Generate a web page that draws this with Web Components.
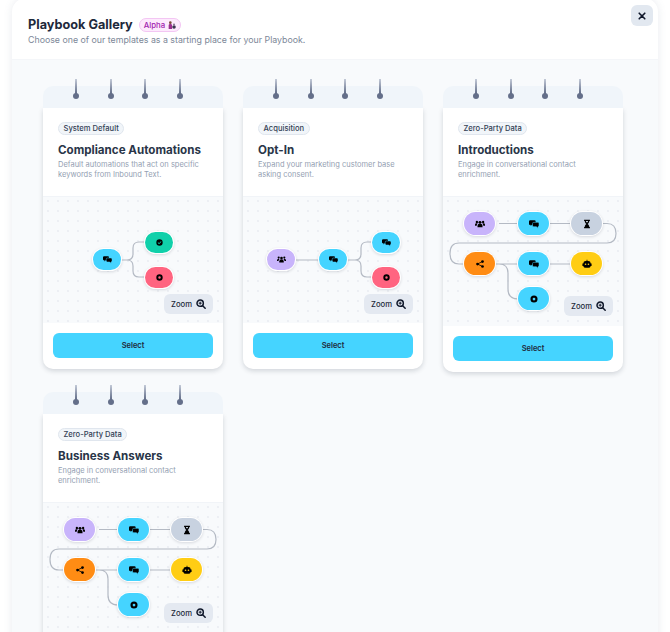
<!DOCTYPE html>
<html>
<head>
<meta charset="utf-8">
<title>Playbook Gallery</title>
<style>
    html, body { margin: 0; height: 632px; overflow: hidden; background: #fff; font-family: Inter, "Liberation Sans", sans-serif; }
</style>
</head>
<body>
<gallery-modal>
    <span slot="title">Playbook Gallery</span>
    <span slot="subtitle">Choose one of our templates as a starting place for your Playbook.</span>

    <playbook-card tag="System Default" heading="Compliance Automations" text="Default automations that act on specific keywords from Inbound Text.">
        <flow-diagram height="127" zoom-bottom="9" wires="M78 64H84Q90 64 90 58V52Q90 46 96 46H102M84 64Q90 64 90 70V75Q90 81 96 81H102">
            <flow-node x="50" y="53" w="28" h="21" color="#45d4ff" icon="chat"></flow-node>
            <flow-node x="102" y="36" w="28" h="21" color="#10d0aa" icon="check"></flow-node>
            <flow-node x="102" y="71" w="28" h="21" color="#ff6480" icon="dot"></flow-node>
        </flow-diagram>
    </playbook-card>

    <playbook-card tag="Acquisition" heading="Opt-In" text="Expand your marketing customer base asking consent.">
        <flow-diagram height="127" zoom-bottom="9" wires="M53 64H76M104 64H112Q118 64 118 58V52Q118 46 124 46H129M112 64Q118 64 118 70V75Q118 81 124 81H129">
            <flow-node x="24" y="53" w="28" h="21" color="#c8b4fb" icon="users"></flow-node>
            <flow-node x="76" y="53" w="28" h="21" color="#45d4ff" icon="chat"></flow-node>
            <flow-node x="129" y="36" w="28" h="21" color="#45d4ff" icon="chat"></flow-node>
            <flow-node x="129" y="71" w="28" h="21" color="#ff6480" icon="dot"></flow-node>
        </flow-diagram>
    </playbook-card>

    <playbook-card tag="Zero-Party Data" heading="Introductions" text="Engage in conversational contact enrichment.">
        <flow-diagram height="130" zoom-bottom="10" wires="M56 27.5H74M107 27.5H127M160 27.5H164Q173 27.5 173 37.5Q173 47 164 47H16Q7 47 7 57.5Q7 68 16 68H21M52 68H75M107 68H127M52 68H56Q65 68 65 77V93Q65 103 75 103">
            <flow-node x="21" y="16" w="31" h="23" color="#c8b4fb" icon="users"></flow-node>
            <flow-node x="75" y="16" w="31" h="23" color="#45d4ff" icon="chat"></flow-node>
            <flow-node x="128" y="16" w="31" h="23" color="#c8d2e0" icon="hourglass"></flow-node>
            <flow-node x="21" y="56" w="31" h="23" color="#ff8c14" icon="share"></flow-node>
            <flow-node x="75" y="56" w="31" h="23" color="#45d4ff" icon="chat"></flow-node>
            <flow-node x="128" y="56" w="31" h="23" color="#ffcd14" icon="robot"></flow-node>
            <flow-node x="75" y="91" w="31" h="23" color="#45d4ff" icon="dot"></flow-node>
        </flow-diagram>
    </playbook-card>

    <playbook-card tag="Zero-Party Data" heading="Business Answers" text="Engage in conversational contact enrichment.">
        <flow-diagram height="130" zoom-bottom="9" wires="M56 27.5H74M107 27.5H127M160 27.5H164Q173 27.5 173 37.5Q173 47 164 47H16Q7 47 7 57.5Q7 68 16 68H21M52 68H75M107 68H127M52 68H56Q65 68 65 77V93Q65 103 75 103">
            <flow-node x="21" y="16" w="31" h="23" color="#c8b4fb" icon="users"></flow-node>
            <flow-node x="75" y="16" w="31" h="23" color="#45d4ff" icon="chat"></flow-node>
            <flow-node x="128" y="16" w="31" h="23" color="#c8d2e0" icon="hourglass"></flow-node>
            <flow-node x="21" y="56" w="31" h="23" color="#ff8c14" icon="share"></flow-node>
            <flow-node x="75" y="56" w="31" h="23" color="#45d4ff" icon="chat"></flow-node>
            <flow-node x="128" y="56" w="31" h="23" color="#ffcd14" icon="robot"></flow-node>
            <flow-node x="75" y="91" w="31" h="23" color="#45d4ff" icon="dot"></flow-node>
        </flow-diagram>
    </playbook-card>
</gallery-modal>

<script>
const icons = {
    chat: '<path d="M3 3h10a3 3 0 0 1 3 3v5a3 3 0 0 1-3 3H7l-3 3v-3.100A3 3 0 0 1 0 11V6a3 3 0 0 1 3-3z"/><path d="M11.500 8h9.500a3 3 0 0 1 3 3v4.500a3 3 0 0 1-2.500 3V22l-3.500-3.500h-6.500a3 3 0 0 1-3-3V11a3 3 0 0 1 3-3z" stroke="currentColor" stroke-width="1.300"/>',
    check: '<path fill-rule="evenodd" d="M12 3.500a8.500 8.500 0 1 1 0 17 8.500 8.500 0 0 1 0-17zm3.800 5.200l-5 5-2.300-2.200-1.400 1.400 3.700 3.600 6.400-6.400z"/>',
    dot: '<path fill-rule="evenodd" d="M12 3.500a8.500 8.500 0 1 1 0 17 8.500 8.500 0 0 1 0-17zm0 5.200a3.300 3.300 0 1 0 0 6.600 3.300 3.300 0 0 0 0-6.600z"/>',
    users: '<circle cx="12" cy="8" r="3.500"/><circle cx="4.500" cy="7" r="2.800"/><circle cx="19.500" cy="7" r="2.800"/><path d="M6 20v-3a6 6 0 0 1 12 0v3z"/><path d="M0 16v-2a4 4 0 0 1 6.500-3A8 8 0 0 0 4 16zM24 16v-2a4 4 0 0 0-6.500-3A8 8 0 0 1 20 16z"/>',
    hourglass: '<path d="M5 2h14v3h-1.500c0 3.500-2 5.500-4 7 2 1.500 4 3.500 4 7H19v3H5v-3h1.500c0-3.500 2-5.500 4-7-2-1.500-4-3.500-4-7H5zm4.500 3c0 1 .5 2 1 3h3c.5-1 1-2 1-3z"/>',
    share: '<circle cx="18" cy="6" r="3.300"/><circle cx="6" cy="12" r="3.300"/><circle cx="18" cy="18" r="3.300"/><path d="M6 12l12-6M6 12l12 6" stroke="#000" stroke-width="1.800"/>',
    robot: '<path fill-rule="evenodd" d="M11 2h2v3h2a6 6 0 0 1 6 5.500h2v6h-2A6 6 0 0 1 15 21H9a6 6 0 0 1-6-4.500H1v-6h2A6 6 0 0 1 9 5h2zM8.500 10.500a2 2 0 1 0 0 4 2 2 0 0 0 0-4zm7 0a2 2 0 1 0 0 4 2 2 0 0 0 0-4z"/>'
};

class GalleryModal extends HTMLElement {
    constructor() {
        super();
        this.attachShadow({ mode: 'open' });
    }

    connectedCallback() {
        this.shadowRoot.innerHTML = `
            <style>
                :host {
                    display: block;
                    position: relative;
                    width: 646px;
                    margin: -2px 0 0 12px;
                    background: #fff;
                    border-radius: 14px 14px 0 0;
                    box-shadow: 0 0 8px rgba(100, 116, 139, .14);
                }
                header {
                    height: 62px;
                    box-sizing: border-box;
                    padding: 18px 0 0 16px;
                    border-bottom: 1px solid #f4f6f9;
                }
                .top { display: flex; align-items: center; gap: 6px; height: 15px; margin-top: 1px; }
                .title { font-size: 12.700px; font-weight: 700; color: #1e293b; line-height: 15px; }
                .badge {
                    display: flex;
                    align-items: center;
                    gap: 3px;
                    height: 12px;
                    padding: 0 4px;
                    border: 1px solid #f3c6f3;
                    border-radius: 7px;
                    background: #fdeafd;
                    color: #a21caf;
                    font-size: 7.800px;
                    font-weight: 500;
                }
                .badge svg { width: 8px; height: 8px; display: block; }
                .sub { margin-top: 1px; font-size: 8.800px; line-height: 13px; color: #7c8798; }
                .close {
                    position: absolute;
                    top: 7px;
                    right: 5px;
                    width: 22px;
                    height: 21px;
                    border: 0;
                    padding: 0;
                    border-radius: 6px;
                    background: #e2e8f0;
                    display: flex;
                    align-items: center;
                    justify-content: center;
                }
                .close svg { width: 8px; height: 8px; display: block; }
                main {
                    display: grid;
                    grid-template-columns: repeat(3, 180px);
                    column-gap: 20px;
                    row-gap: 13px;
                    align-items: start;
                    padding: 19px 0 0 31px;
                    background: #f8fafc;
                }
            </style>
            <header>
                <div class="top">
                    <div class="title"><slot name="title"></slot></div>
                    <div class="badge">Alpha
                        <svg viewBox="0 0 12 12">
                            <circle cx="3.500" cy="2.500" r="2" fill="#7a4a3a"/>
                            <path d="M1 12V6.500a2 2 0 0 1 2-2h1a2 2 0 0 1 2 2V12z" fill="#9b2f8f"/>
                            <circle cx="9" cy="9" r="2.700" fill="#3b3350"/>
                            <path d="M7.500 4h3v1.500h-3z" fill="#6d5b7a"/>
                        </svg>
                    </div>
                </div>
                <div class="sub"><slot name="subtitle"></slot></div>
            </header>
            <button class="close" aria-label="Close">
                <svg viewBox="0 0 10 10"><path d="M1.500 1.500l7 7M8.500 1.500l-7 7" stroke="#0f172a" stroke-width="2" stroke-linecap="round"/></svg>
            </button>
            <main><slot></slot></main>
        `;
    }
}

class PlaybookCard extends HTMLElement {
    constructor() {
        super();
        this.attachShadow({ mode: 'open' });
    }

    connectedCallback() {
        const rings = '<i></i><i></i><i></i><i></i>';
        this.shadowRoot.innerHTML = `
            <style>
                :host { display: block; width: 180px; }
                .binding {
                    position: relative;
                    z-index: 1;
                    display: flex;
                    gap: 31.700px;
                    height: 22px;
                    margin-top: 7px;
                    padding-left: 31.500px;
                    box-sizing: border-box;
                    background: #f0f5fa;
                    border-radius: 10px 10px 0 0;
                }
                .binding i {
                    position: relative;
                    display: block;
                    width: 3px;
                    height: 20px;
                    margin-top: -7px;
                }
                .binding i::before {
                    content: '';
                    position: absolute;
                    left: .5px;
                    top: 0;
                    width: 2px;
                    height: 15px;
                    background: linear-gradient(#c3cad8, #5f6a85);
                }
                .binding i::after {
                    content: '';
                    position: absolute;
                    left: -1.500px;
                    top: 14px;
                    width: 6px;
                    height: 6px;
                    border-radius: 50%;
                    background: #646f8a;
                }
                .card {
                    border-radius: 0 0 10px 10px;
                    background: #fff;
                    box-shadow: 0 2px 5px rgba(15, 23, 42, .16);
                }
                .info { height: 88px; box-sizing: border-box; padding: 14px 15px 0; }
                .tag {
                    display: block;
                    width: fit-content;
                    height: 13px;
                    box-sizing: border-box;
                    padding: 0 4.500px;
                    border: 1px solid #e0e6ee;
                    border-radius: 7px;
                    background: #f1f5f9;
                    color: #334155;
                    font-size: 7.600px;
                    line-height: 11px;
                    font-weight: 500;
                }
                h3 {
                    margin: 7px 0 2px;
                    font-size: 11.600px;
                    line-height: 16px;
                    font-weight: 700;
                    color: #293548;
                    white-space: nowrap;
                }
                p { margin: 0; font-size: 7.500px; line-height: 10px; color: #94a0b2; }
                .foot { padding: 10px 10px 11px; }
                button {
                    display: block;
                    width: 160px;
                    height: 25px;
                    padding: 0;
                    border: 0;
                    border-radius: 6px;
                    background: #45d4ff;
                    color: #1e293b;
                    font: 600 7.500px Inter, "Liberation Sans", sans-serif;
                }
            </style>
            <div class="binding">${rings}</div>
            <div class="card">
                <div class="info">
                    <span class="tag">${this.getAttribute('tag')}</span>
                    <h3>${this.getAttribute('heading')}</h3>
                    <p>${this.getAttribute('text')}</p>
                </div>
                <slot></slot>
                <div class="foot"><button>Select</button></div>
            </div>
        `;
    }
}

class FlowDiagram extends HTMLElement {
    constructor() {
        super();
        this.attachShadow({ mode: 'open' });
    }

    connectedCallback() {
        const height = this.getAttribute('height');
        this.shadowRoot.innerHTML = `
            <style>
                :host {
                    display: block;
                    position: relative;
                    height: ${height}px;
                    overflow: hidden;
                    background-color: #f8fafc;
                    background-image: radial-gradient(circle, #e6eaf0 .6px, transparent .9px);
                    background-size: 10px 10px;
                    box-shadow: inset 0 1px 0 #f1f4f8;
                }
                svg.wires { position: absolute; left: 0; top: 0; }
                .zoom {
                    position: absolute;
                    right: 10px;
                    bottom: ${this.getAttribute('zoom-bottom')}px;
                    width: 49px;
                    height: 20px;
                    display: flex;
                    align-items: center;
                    justify-content: center;
                    gap: 4px;
                    padding: 0;
                    border: 0;
                    border-radius: 6px;
                    background: #e4e9f1;
                    color: #1e293b;
                    font: 500 7.700px Inter, "Liberation Sans", sans-serif;
                }
                .zoom svg { width: 10px; height: 10px; display: block; }
            </style>
            <svg class="wires" width="180" height="${height}" fill="none" stroke="#b4bac4" stroke-width="1.200">
                <path d="${this.getAttribute('wires')}"/>
            </svg>
            <slot></slot>
            <button class="zoom">Zoom
                <svg viewBox="0 0 12 12">
                    <circle cx="5" cy="5" r="3.800" fill="none" stroke="#0f172a" stroke-width="1.800"/>
                    <path d="M3.200 5h3.600M5 3.200v3.600" stroke="#0f172a" stroke-width="1.200"/>
                    <path d="M8 8l3 3" stroke="#0f172a" stroke-width="1.800" stroke-linecap="round"/>
                </svg>
            </button>
        `;
    }
}

class FlowNode extends HTMLElement {
    constructor() {
        super();
        this.attachShadow({ mode: 'open' });
    }

    connectedCallback() {
        const w = this.getAttribute('w');
        const h = this.getAttribute('h');
        const size = w == 31 ? 10 : 9;
        const color = this.getAttribute('color');
        this.shadowRoot.innerHTML = `
            <style>
                :host {
                    position: absolute;
                    left: ${this.getAttribute('x')}px;
                    top: ${this.getAttribute('y')}px;
                    width: ${w}px;
                    height: ${h}px;
                    display: flex;
                    align-items: center;
                    justify-content: center;
                    border-radius: ${h / 2}px;
                    background: ${color};
                    box-shadow: 0 0 0 1px #fff, 0 1px 3px 1px rgba(15, 23, 42, .14);
                }
                svg { width: ${size}px; height: ${size}px; display: block; fill: #000; color: ${color}; }
            </style>
            <svg viewBox="0 0 24 24">${icons[this.getAttribute('icon')]}</svg>
        `;
    }
}

customElements.define('gallery-modal', GalleryModal);
customElements.define('playbook-card', PlaybookCard);
customElements.define('flow-diagram', FlowDiagram);
customElements.define('flow-node', FlowNode);
</script>
</body>
</html>
